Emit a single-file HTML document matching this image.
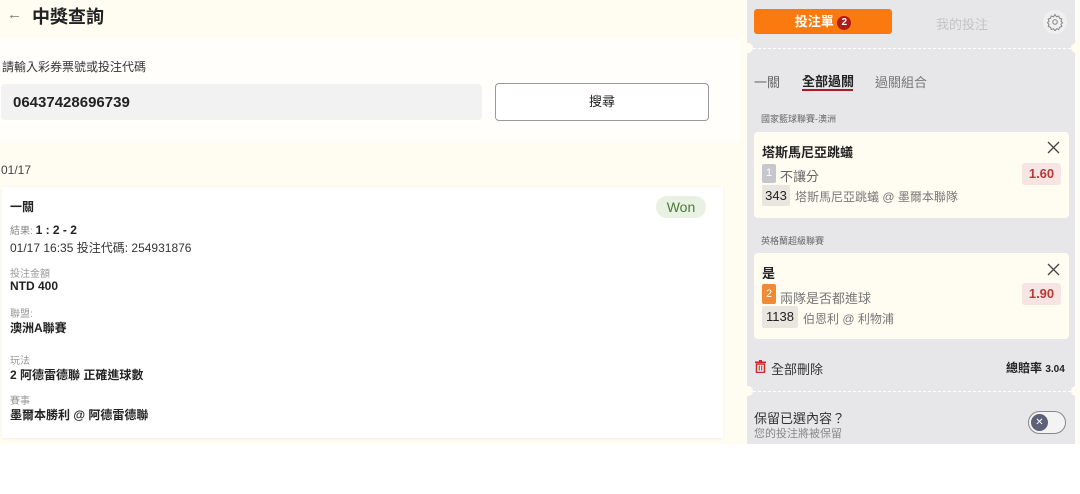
<!DOCTYPE html>
<html><head><meta charset="utf-8"><style>
*{margin:0;padding:0;box-sizing:border-box}
body{width:1080px;height:494px;background:#fff;font-family:"Liberation Sans","Noto Sans CJK TC",sans-serif;color:#222;position:relative;overflow:hidden}
.a{position:absolute;white-space:nowrap}
.cream{background:#fffcf2}
</style></head><body>
<div class="a cream" style="left:0;top:0;width:1080px;height:444px"></div>
<div class="a" style="left:0;top:38px;width:740px;height:104px;background:#fffefa"></div>
<div class="a" style="left:7px;top:6px;font-size:15px;color:#777">←</div>
<div class="a" style="left:32px;top:3px;font-size:18px;font-weight:bold">中獎查詢</div>
<div class="a" style="left:2px;top:58px;font-size:12px;color:#333">請輸入彩券票號或投注代碼</div>
<div class="a" style="left:1px;top:84px;width:481px;height:36px;background:#f2f2f2;border-radius:4px"></div>
<div class="a" style="left:13px;top:94px;font-size:15px;font-weight:bold">06437428696739</div>
<div class="a" style="left:495px;top:83px;width:214px;height:38px;border:1px solid #999;border-radius:4px;background:#fff;text-align:center;line-height:36px;font-size:13px">搜尋</div>
<div class="a" style="left:1px;top:163px;font-size:12px;color:#444">01/17</div>
<div class="a" style="left:2px;top:187px;width:721px;height:251px;background:#fff;box-shadow:0 1px 3px rgba(0,0,0,.06)"></div>
<div class="a" style="left:10px;top:198px;font-size:12px;font-weight:bold">一關</div>
<div class="a" style="left:656px;top:196px;width:50px;height:22px;background:#e8f1e2;border-radius:11px;color:#4c7a3a;font-size:14px;text-align:center;line-height:22px">Won</div>
<div class="a" style="left:10px;top:222px;font-size:10px;color:#888">結果: <b style="font-size:12px;color:#222">1 : 2 - 2</b></div>
<div class="a" style="left:10px;top:239px;font-size:12px;color:#333">01/17 16:35 投注代碼: 254931876</div>
<div class="a" style="left:10px;top:265px;font-size:10px;color:#999">投注金額</div>
<div class="a" style="left:10px;top:279px;font-size:12px;font-weight:bold">NTD 400</div>
<div class="a" style="left:10px;top:305px;font-size:10px;color:#999">聯盟:</div>
<div class="a" style="left:10px;top:319px;font-size:12px;font-weight:bold">澳洲A聯賽</div>
<div class="a" style="left:10px;top:352px;font-size:10px;color:#999">玩法</div>
<div class="a" style="left:10px;top:366px;font-size:12px;font-weight:bold">2 阿德雷德聯 正確進球數</div>
<div class="a" style="left:10px;top:392px;font-size:10px;color:#999">賽事</div>
<div class="a" style="left:10px;top:406px;font-size:12px;font-weight:bold">墨爾本勝利 @ 阿德雷德聯</div>

<div class="a" style="left:747px;top:0;width:328px;height:444px;background:#e7e7e9"></div>
<div class="a" style="left:754px;top:9px;width:138px;height:25px;background:#fb7a10;border-radius:3px;color:#fff;font-size:13px;text-align:center;line-height:25px;font-weight:bold">投注單 <span style="display:inline-block;width:14px;height:14px;border-radius:7px;background:#b11a1a;font-size:10px;line-height:14px;vertical-align:1px">2</span></div>
<div class="a" style="left:936px;top:14px;font-size:13px;color:#c4c4c4">我的投注</div>
<div class="a" style="left:1043px;top:10px;width:24px;height:24px;border-radius:12px;background:#f0f0f0"></div>
<svg class="a" style="left:1046px;top:13px" width="18" height="18" viewBox="0 0 24 24" fill="none" stroke="#888" stroke-width="1.4"><circle cx="12" cy="12" r="3"/><path d="M12 2l2 3 3-1 1 3 3 1-1 3 2 2-2 2 1 3-3 1-1 3-3-1-2 3-2-3-3 1-1-3-3-1 1-3-2-2 2-2-1-3 3-1 1-3 3 1z"/></svg>
<div class="a" style="left:743px;top:43px;width:10px;height:10px;border-radius:5px;background:#fffcf2"></div>
<div class="a" style="left:1071px;top:43px;width:10px;height:10px;border-radius:5px;background:#fffcf2"></div>
<div class="a" style="left:753px;top:48px;width:318px;border-top:1.5px dashed #fff"></div>
<div class="a" style="left:754px;top:72px;font-size:13px;color:#666">一關</div>
<div class="a" style="left:802px;top:71px;font-size:13px;font-weight:bold">全部過關</div>
<div class="a" style="left:802px;top:89px;width:51px;height:2px;background:#a81c22"></div>
<div class="a" style="left:875px;top:72px;font-size:13px;color:#777">過關組合</div>
<div class="a" style="left:761px;top:112px;font-size:9px;color:#666">國家籃球聯賽-澳洲</div>
<div class="a" style="left:754px;top:132px;width:315px;height:86px;background:#fffcf2;border-radius:4px"></div>
<div class="a" style="left:762px;top:142px;font-size:13px;font-weight:bold">塔斯馬尼亞跳蟻</div>
<svg class="a" style="left:1047px;top:141px" width="13" height="13"><path d="M1 1L12 12M12 1L1 12" stroke="#444" stroke-width="1.3"/></svg>
<div class="a" style="left:762px;top:164px;width:14px;height:19px;background:#c6c6cc;border-radius:2px;color:#fff;font-size:11px;text-align:center;line-height:19px">1</div>
<div class="a" style="left:780px;top:166px;font-size:13px;color:#666">不讓分</div>
<div class="a" style="left:1022px;top:163px;width:39px;height:22px;background:#f7e5e3;border-radius:3px;color:#b53a3a;font-size:13px;font-weight:bold;text-align:center;line-height:22px">1.60</div>
<div class="a" style="left:762px;top:185px;width:28px;height:21px;background:#e9e6e0;border-radius:2px;font-size:13px;text-align:center;line-height:21px">343</div>
<div class="a" style="left:795px;top:188px;font-size:12px;color:#777">塔斯馬尼亞跳蟻 @ 墨爾本聯隊</div>
<div class="a" style="left:761px;top:234px;font-size:9px;color:#666">英格蘭超級聯賽</div>
<div class="a" style="left:754px;top:253px;width:315px;height:86px;background:#fffcf2;border-radius:4px"></div>
<div class="a" style="left:762px;top:263px;font-size:13px;font-weight:bold">是</div>
<svg class="a" style="left:1047px;top:263px" width="13" height="13"><path d="M1 1L12 12M12 1L1 12" stroke="#444" stroke-width="1.3"/></svg>
<div class="a" style="left:762px;top:284px;width:14px;height:20px;background:#f08a34;border-radius:2px;color:#fff;font-size:11px;text-align:center;line-height:20px">2</div>
<div class="a" style="left:780px;top:288px;font-size:13px;color:#777">兩隊是否都進球</div>
<div class="a" style="left:1022px;top:283px;width:39px;height:22px;background:#f7e5e3;border-radius:3px;color:#b53a3a;font-size:13px;font-weight:bold;text-align:center;line-height:22px">1.90</div>
<div class="a" style="left:762px;top:306px;width:36px;height:22px;background:#e9e6e0;border-radius:2px;font-size:13px;text-align:center;line-height:22px">1138</div>
<div class="a" style="left:803px;top:310px;font-size:12px;color:#777">伯恩利 @ 利物浦</div>
<svg class="a" style="left:755px;top:360px" width="11" height="13" viewBox="0 0 11 13"><rect x="0" y="1.5" width="11" height="1.5" fill="#c82a2a"/><rect x="4" y="0" width="3" height="2" fill="#c82a2a"/><path d="M1.5 4h8v8.5h-8z" fill="none" stroke="#c82a2a" stroke-width="1.5"/><path d="M4.3 5.5v5M6.7 5.5v5" stroke="#c82a2a"/></svg>
<div class="a" style="left:771px;top:359px;font-size:13px;color:#333">全部刪除</div>
<div class="a" style="left:1006px;top:359px;font-size:12px;font-weight:bold">總賠率 <span style="font-size:10px">3.04</span></div>
<div class="a" style="left:743px;top:386px;width:10px;height:10px;border-radius:5px;background:#fffcf2"></div>
<div class="a" style="left:1071px;top:386px;width:10px;height:10px;border-radius:5px;background:#fffcf2"></div>
<div class="a" style="left:753px;top:391px;width:318px;border-top:1.5px dashed #fff"></div>
<div class="a" style="left:754px;top:408px;font-size:13px;color:#333">保留已選內容？</div>
<div class="a" style="left:754px;top:425px;font-size:11px;color:#888">您的投注將被保留</div>
<div class="a" style="left:1028px;top:411px;width:38px;height:23px;border:1.5px solid #888;border-radius:12px;background:#f3f3f3"></div>
<div class="a" style="left:1031px;top:414px;width:17px;height:17px;border-radius:9px;background:#5e5f78;color:#fff;font-size:10px;text-align:center;line-height:17px">✕</div>
</body></html>
